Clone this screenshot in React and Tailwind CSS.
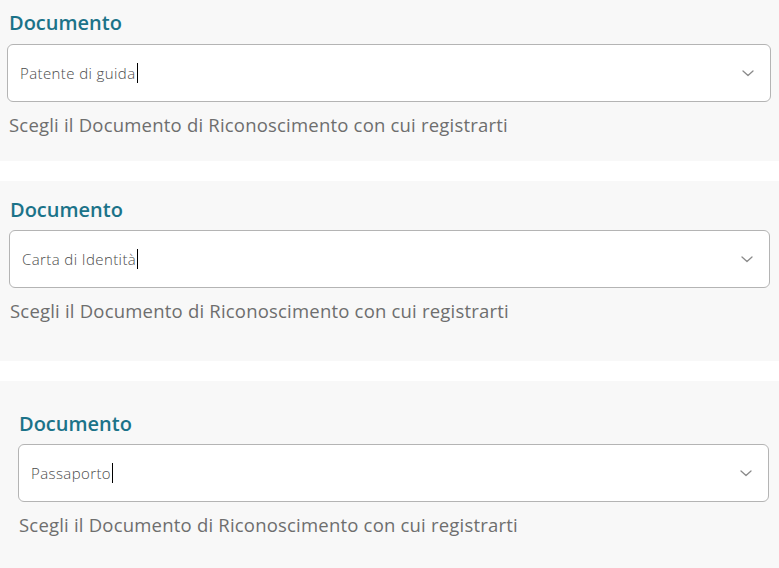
import React from 'react';

function ChevronDown() {
  return (
    <svg width="12" height="7" viewBox="0 0 12 7" fill="none" className="shrink-0">
      <path d="M1 1 L6 5.5 L11 1" stroke="#8a8a8a" strokeWidth="1.3" strokeLinecap="round" strokeLinejoin="round" />
    </svg>
  );
}

function DocumentSelect({ value, className, fieldClass, labelGap }) {
  return (
    <section className={`bg-[#f8f8f8] ${className}`}>
      <label className="block text-[20px] leading-[26px] font-semibold text-[#1b7389]">
        Documento
      </label>
      <div
        className={`${labelGap} ${fieldClass} h-[58px] flex items-center justify-between bg-white border border-[#b4b4b4] rounded-[6px] pl-[12px] pr-[16px]`}
      >
        <span className="text-[15px] font-light tracking-[0.4px] text-[#4a4a4a] flex items-center">
          {value}
          <span className="inline-block w-px h-[20px] bg-black ml-px" />
        </span>
        <ChevronDown />
      </div>
      <p className="mt-[11px] text-[18.5px] leading-[24px] tracking-[0.2px] text-[#6e6e6e]">
        Scegli il Documento di Riconoscimento con cui registrarti
      </p>
    </section>
  );
}

export default function App() {
  return (
    <div
      className="w-[779px] h-[568px] bg-white flex flex-col gap-[20px] overflow-hidden"
      style={{ fontFamily: '"Open Sans", "Noto Sans", sans-serif' }}
    >
      <DocumentSelect
        value="Patente di guida"
        className="h-[161px] pt-[10px] pl-[9px]"
        fieldClass="ml-[-2px] w-[764px]"
        labelGap="mt-[8px]"
      />
      <DocumentSelect
        value="Carta di Identità"
        className="h-[180px] pt-[16px] pl-[10px]"
        fieldClass="ml-[-1px] w-[761px]"
        labelGap="mt-[7px]"
      />
      <DocumentSelect
        value="Passaporto"
        className="flex-1 pt-[30px] pl-[19px]"
        fieldClass="ml-[-1px] w-[751px]"
        labelGap="mt-[7px]"
      />
    </div>
  );
}
